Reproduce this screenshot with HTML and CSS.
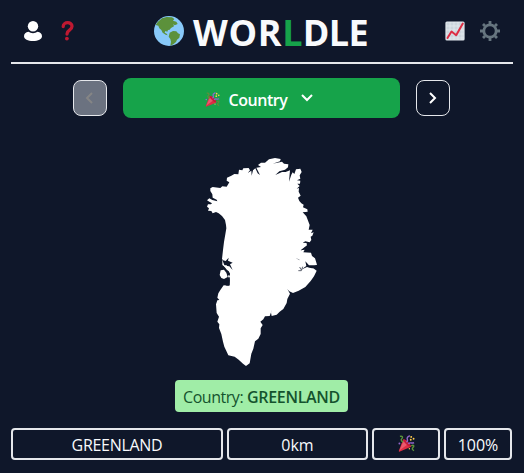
FILE: index.html
```html
<!DOCTYPE html>
<html lang="en">
<head>
<meta charset="utf-8">
<title>Worldle</title>
<link rel="stylesheet" href="styles.css">
</head>
<body>
<svg class="defs" width="0" height="0" aria-hidden="true">
  <symbol id="party" viewBox="0 0 36 36">
    <path fill="#dd2e44" d="M11 9 2 33c-.8 2 0 3 2 2l24-10C25 17 18 10 11 9Z"/>
    <path fill="#ea596e" d="m12 12-9 21 17-13Z"/>
    <ellipse cx="19" cy="17" rx="3" ry="10" transform="rotate(-45 19 17)" fill="#c51b38"/>
    <path d="M4 3c6-1 7 2 4 5s0 5 3 7M28 23c5-3 7 0 4 3s-2 5 2 7" fill="none" stroke="#5c913b" stroke-width="3"/>
    <path d="M18 15c6-4-1-6 2-10s5-1 3-4M22 19c3-5 7 0 12-3" fill="none" stroke="#9266cc" stroke-width="3"/>
    <circle cx="3" cy="18" r="2" fill="#9266cc"/>
    <g fill="#ffcc4d"><circle cx="28" cy="4" r="2"/><circle cx="33" cy="8" r="2"/><circle cx="27" cy="10" r="2"/><circle cx="24" cy="29" r="1.5"/></g>
  </symbol>
</svg>
<main class="game">
  <header class="header">
    <nav class="tools">
      <svg class="user" viewBox="0 0 18 20"><circle cx="9" cy="5.2" r="5.2"/><path d="M4.5 10.8C1.7 11 0 13.1 0 15.2 0 18 3.8 20 9 20s9-2 9-4.8c0-2.1-1.7-4.2-4.5-4.4C11 12.6 7 12.6 4.5 10.8Z"/></svg>
      <svg class="help" viewBox="0 0 12 20"><path d="M1.7 5.6c0-5.2 8.8-5.2 8.8-.3 0 4.4-5 3.4-5 7.7"/><circle cx="5.4" cy="17.6" r="1.9"/></svg>
    </nav>
    <h1 class="title">
      <svg class="globe" viewBox="0 0 90 90"><circle cx="45" cy="45" r="45" fill="#88c9f9"/><path fill="#5c913b" d="M11 18 24 7l14-4 16 1 7 5-4 5 10 3 4 7-9 4-4-4 2 7-9 5-4 5-5 1-2 5-6-2-2 5 6 3 3 5-6-2-9-6-4-8-6-5-3-8-8-2ZM47 50l10-5 10 1 5 6 6 3-2 10-7 6-3 7-8 7-9 4 2-12-2-8-5-7Z"/></svg>
      <span class="word"><span class="start">WOR</span><span class="accent">L</span><span class="end">DLE</span></span>
    </h1>
    <nav class="tools">
      <svg class="chart" viewBox="0 0 20 20"><rect x=".4" y=".4" width="19.2" height="19.2" rx="1.5" fill="#e1e8ed"/><path d="M1.5 1.5h17v17h-17Z" fill="#ccd6dd"/><path d="M5 1v18M9 1v18M13 1v18M17 1v18M1 5h18M1 9h18M1 13h18M1 17h18" stroke="#e5ebef" stroke-width=".8"/><path d="m2.5 17 4-6.5 4.7 3.7L17.8 2.5" fill="none" stroke="#dd2e44" stroke-width="2" stroke-linecap="round" stroke-linejoin="round"/></svg>
      <svg class="gear" viewBox="-10 -10 20 20"><circle r="6.2"/><path d="M0-7V-10M0 7V10M-7 0H-10M7 0H10M-5-5-7-7M5-5 7-7M-5 5-7 7M5 5 7 7"/></svg>
    </nav>
  </header>
  <section class="rounds">
    <button class="step disabled" disabled><svg viewBox="0 0 12 12"><path d="M8 1 3 6l5 5"/></svg></button>
    <button class="round"><svg class="mini"><use href="#party"/></svg><span class="label">Country</span><svg class="down" viewBox="0 0 12 8"><path d="m1 1 5 5 5-5"/></svg></button>
    <button class="step"><svg viewBox="0 0 12 12"><path d="m3 1 5 5-5 5"/></svg></button>
  </section>
  <svg class="shape" viewBox="0 0 375 660">
    <path class="land" d="M78 225 75 210 66 198 56 190 48 186 38 190 34 183 24 182 27 175 21 170 24 163 33 163 36 160 28 155 21 151 28 145 37 150 52 154 50 149 38 143 37 133 31 123 31 115 38 111 61 114 67 109 80 110 88 97 80 92 81 83 94 77 103 72 115 73 117 59 127 61 130 55 146 54 150 61 143 69 154 62 155 77 159 61 166 55 173 70 180 75 169 53 183 51 174 45 183 38 195 38 207 28 225 24 242 27 240 34 218 41 246 35 252 41 265 43 264 52 255 59 238 64 226 75 246 66 257 66 270 61 267 95 274 74 278 67 283 72 288 58 301 56 305 66 299 76 301 86 291 91 301 92 300 101 292 101 299 108 290 116 297 114 296 125 302 137 294 143 298 153 304 160 311 164 309 172 322 178 323 185 308 187 319 199 329 225 326 239 338 239 333 250 341 247 337 257 332 260 334 270 329 277 316 274 308 278 320 279 321 286 302 301 314 299 310 307 333 308 336 318 345 325 351 344 341 349 324 349 303 359 321 350 315 341 296 328 286 324 300 331 316 335 320 350 340 355 350 362 342 379 332 393 316 411 296 422 279 429 268 424 262 417 270 431 262 447 260 459 250 477 239 485 230 494 215 498 213 488 216 479 209 498 195 499 190 508 181 515 188 525 182 535 182 552 175 566 165 574 160 596 154 611 149 640 138 648 129 641 116 629 104 620 85 616 78 601 73 590 69 575 64 552 57 534 58 523 52 515 57 500 50 489 48 463 52 451 58 450 52 443 55 430 61 420 71 406 88 407 89 390 84 378 90 371 82 356 74 350 67 345 67 330 78 332 87 323 85 331 97 335 89 340 98 348 97 361 85 350 76 338 66 327 69 300 72 276 76 253 79 235Z"/>
    <path class="inlet" d="M67 330 77 333 86 323 84 332 98 338 90 343 98 360 88 349 75 347 90 372 89 406 79 407 79 386 90 381 82 360 75 350Z"/>
    <path class="land" d="m62 361 10-2 7 9 4 13-11 6-8-3-5-9ZM70 346l10 0 10 19-9-5Z"/>
    <path class="fjord" d="M295 362h9l4-12M303 359l-4-8M305 300l11-7M320 282l11 5 1 12-11 5"/>
    <path class="inlet" d="m316 334 11 12 25 0 0 7-16 2-15-4-18 8 16-11Z"/>
  </svg>
  <p class="answer">Country: <strong>GREENLAND</strong></p>
  <section class="guess">
    <div class="cell name">GREENLAND</div>
    <div class="cell">0km</div>
    <div class="cell"><svg class="celebrate"><use href="#party"/></svg></div>
    <div class="cell">100%</div>
  </section>
</main>
</body>
</html>
```

FILE: styles.css
```css
* { box-sizing: border-box; }
body { margin: 0; background: #0f172a; color: #f8fafc; font: 16px/24px "Open Sans", "Noto Sans", sans-serif; overflow: hidden; }
.defs { display: block; }
.game { height: 473px; padding: 0 12px 0 11px; display: flex; flex-direction: column; align-items: center; }
.header { width: 502px; height: 64px; flex-shrink: 0; align-self: flex-start; border-bottom: 2px solid #e5e7eb; display: flex; align-items: center; justify-content: space-between; padding: 0 12px; }
.tools { display: flex; align-items: center; gap: 15px; width: 56px; }
.user { width: 20px; height: 20px; fill: #fff; }
.help { width: 13px; height: 20px; fill: #be1931; margin-left: 3px; }
.help path { fill: none; stroke: #be1931; stroke-width: 3.3; stroke-linecap: round; }
.chart, .gear { width: 20px; height: 20px; flex-shrink: 0; }
.gear { fill: none; stroke: #66757f; stroke-width: 2.8; }
.title { display: flex; align-items: center; gap: 9px; margin: 0 0 0 -2px; width: 214px; font-size: 36px; line-height: 40px; font-weight: 700; }
.globe { width: 30px; height: 30px; flex-shrink: 0; }
.word { white-space: nowrap; padding-top: 4px; }
.start { letter-spacing: .7px; }
.end { letter-spacing: -.6px; }
.accent { color: #16a34a; }
.rounds { display: flex; align-items: center; gap: 16px; margin-top: 14px; height: 40px; }
button { font: inherit; color: #fff; padding: 0; }
.step { width: 34px; height: 36px; border: 1px solid #e5e7eb; border-radius: 8px; background: none; display: flex; align-items: center; justify-content: center; }
.step svg { width: 12px; height: 12px; fill: none; stroke: #fff; stroke-width: 2; }
.disabled { background: #6b7280; }
.disabled svg { stroke: #858585; }
.round { width: 277px; height: 40px; border: 0; border-radius: 8px; background: #16a34a; display: flex; align-items: center; padding-left: 82px; padding-top: 3px; font-weight: 600; }
.mini { width: 15px; height: 15px; margin-right: 8px; }
.label { width: 60px; white-space: nowrap; letter-spacing: -.45px; }
.down { width: 12px; height: 8px; margin-left: 13px; margin-top: -4px; fill: none; stroke: #fff; stroke-width: 2; }
.shape { width: 125px; height: 220px; margin: 32px 0 0 2px; flex-shrink: 0; }
.land { fill: #fff; }
.inlet { fill: #0f172a; }
.fjord { fill: none; stroke: #0f172a; stroke-width: 2; }
.answer { margin: 10px 0 0; width: 173px; height: 32px; padding: 5px 0 3px 8px; border-radius: 4px; background: #a0eda7; color: #14532d; white-space: nowrap; letter-spacing: -.45px; }
.answer strong { font-weight: 600; letter-spacing: -.3px; }
.guess { width: 501px; margin-top: 16px; display: grid; grid-template-columns: 212px 141px 68px 68px; gap: 4px; }
.cell { height: 32px; border: 2px solid #e5e7eb; border-radius: 4px; display: flex; align-items: center; justify-content: center; padding-top: 2px; white-space: nowrap; }
.name { letter-spacing: -.3px; }
.celebrate { width: 17px; height: 17px; margin-top: -4px; }
```
